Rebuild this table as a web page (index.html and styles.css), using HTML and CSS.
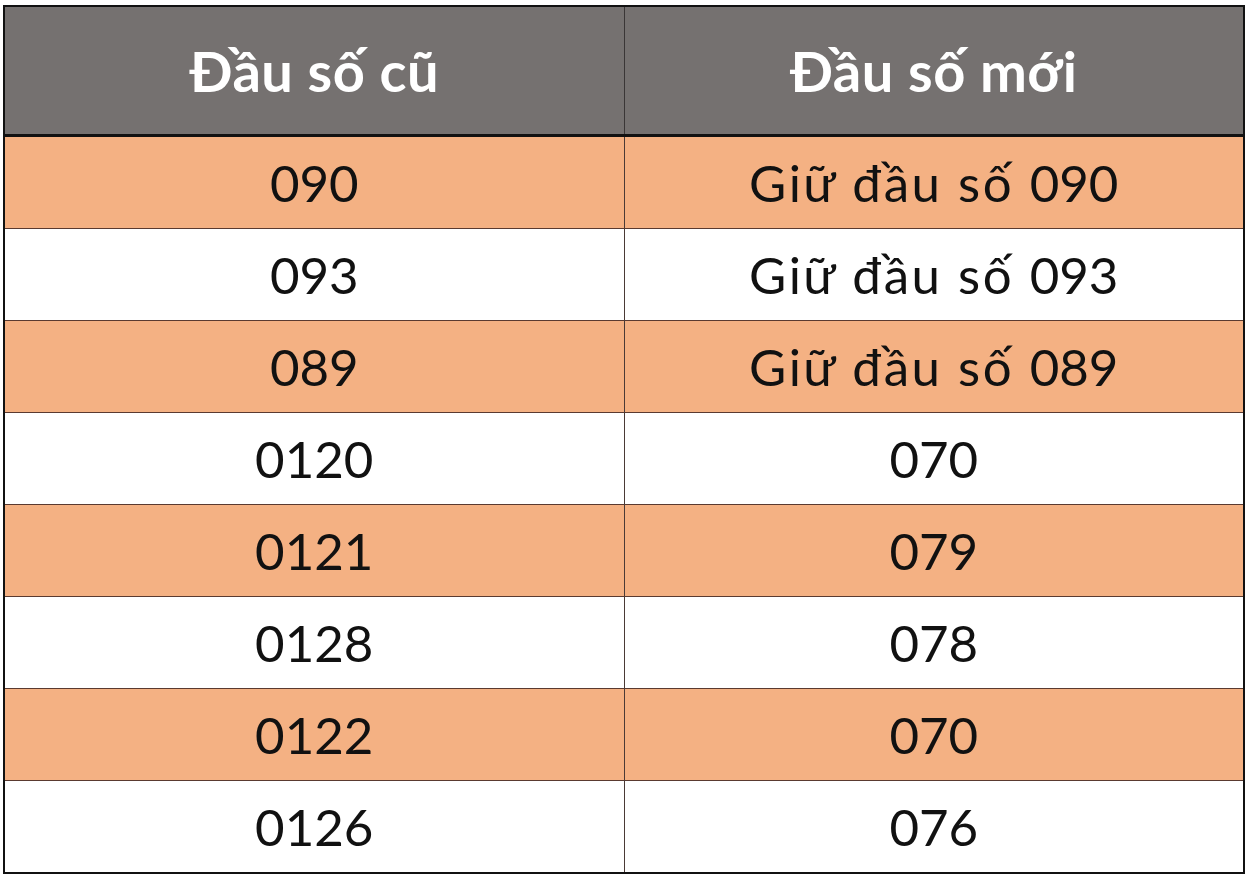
FILE: index.html
```html
<!DOCTYPE html>
<html lang="vi">
<head>
<meta charset="utf-8">
<link rel="stylesheet" href="styles.css">
</head>
<body>
<table class="prefix-table">
  <thead>
    <tr><th>Đầu số cũ</th><th>Đầu số mới</th></tr>
  </thead>
  <tbody>
    <tr class="odd"><td>090</td><td><span class="keep-label">Giữ đầu số </span>090</td></tr>
    <tr><td>093</td><td><span class="keep-label">Giữ đầu số </span>093</td></tr>
    <tr class="odd"><td>089</td><td><span class="keep-label">Giữ đầu số </span>089</td></tr>
    <tr><td>0120</td><td>070</td></tr>
    <tr class="odd"><td>0121</td><td>079</td></tr>
    <tr><td>0128</td><td>078</td></tr>
    <tr class="odd"><td>0122</td><td>070</td></tr>
    <tr><td>0126</td><td>076</td></tr>
  </tbody>
</table>
</body>
</html>
```
FILE: styles.css
```css
html, body {
  margin: 0;
  background: #ffffff;
}
body {
  padding: 5px 6px 0 3px;
  font-family: Lato, "Noto Sans", sans-serif;
}
.prefix-table {
  width: 1242px;
  border-collapse: collapse;
  border: 2px solid #111;
  table-layout: fixed;
}
.prefix-table th,
.prefix-table td {
  width: 50%;
  text-align: center;
  padding: 0;
}
.prefix-table th {
  height: 127px;
  background: #757170;
  color: #ffffff;
  font-weight: 700;
  font-size: 56px;
  letter-spacing: 0.5px;
  border-bottom: 3px solid #111;
  border-left: 1px solid #3a3636;
}
.prefix-table td {
  height: 91px;
  font-size: 51px;
  color: #111;
  border-top: 1px solid #5a3a30;
  border-left: 1px solid #4a3a36;
}
.prefix-table tr.odd td {
  background: #f4b183;
}
.keep-label {
  letter-spacing: 2.5px;
}
```
